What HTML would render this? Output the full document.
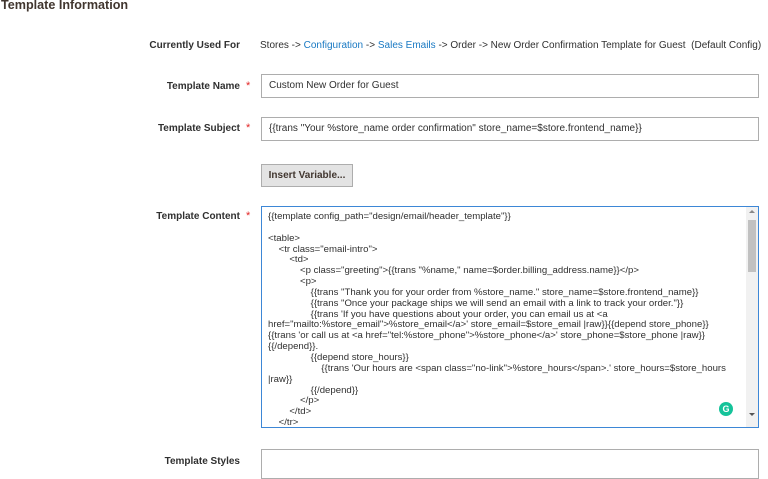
<!DOCTYPE html>
<html><head><meta charset="utf-8"><style>
*{margin:0;padding:0;box-sizing:border-box}
body{width:768px;height:471px;overflow:hidden;background:#fff;font-family:"Liberation Sans","DejaVu Sans",sans-serif;color:#303030;position:relative}
.a{position:absolute;white-space:nowrap}
h1{position:absolute;left:1px;top:-2px;font-size:12.6px;font-weight:bold;color:#41362f}
.lbl{font-size:10px;font-weight:bold;color:#303030;text-align:right;right:528px}
.star{color:#e22626;font-size:11px;left:246px}
.inp{position:absolute;left:261px;width:498px;border:1px solid #adadad;background:#fff;font-size:10px;padding:0 7px;line-height:22px;color:#303030}
.lk{color:#1979c3}
.btn{left:261px;top:164px;width:92px;height:23px;background:#e3e3e3;border:1px solid #adadad;font-size:10px;font-weight:bold;color:#41362f;text-align:center;line-height:21px}
.ta{position:absolute;left:261px;top:206px;width:498px;height:222px;border:1px solid #3d87d6;overflow:hidden;font-size:9.6px;line-height:10.85px;color:#303030;padding:5px 20px 0 6px}
.ta div{white-space:nowrap}
.sb{position:absolute;right:0;top:0;width:12px;height:100%;background:#f1f1f1}
.th{position:absolute;left:2px;top:13px;width:8px;height:52px;background:#c1c1c1}
</style></head><body>
<h1>Template Information</h1>
<div class="a lbl" style="top:40px">Currently Used For</div>
<div class="a" style="left:260px;top:40px;font-size:10px">Stores -&gt; <span class="lk">Configuration</span> -&gt; <span class="lk">Sales Emails</span> -&gt; Order -&gt; New Order Confirmation Template for Guest &nbsp;(Default Config)</div>
<div class="a lbl" style="top:81px">Template Name</div><div class="a star" style="top:80px">*</div>
<div class="inp" style="top:74px;height:24px">Custom New Order for Guest</div>
<div class="a lbl" style="top:123px">Template Subject</div><div class="a star" style="top:122px">*</div>
<div class="inp" style="top:117px;height:24px">{{trans "Your %store_name order confirmation" store_name=$store.frontend_name}}</div>
<div class="a btn">Insert Variable...</div>
<div class="a lbl" style="top:211px">Template Content</div><div class="a star" style="top:210px">*</div>
<div class="ta">
<div>{{template config_path="design/email/header_template"}}</div>
<div>&nbsp;</div>
<div>&lt;table&gt;</div>
<div>&nbsp;&nbsp;&nbsp;&nbsp;&lt;tr class="email-intro"&gt;</div>
<div>&nbsp;&nbsp;&nbsp;&nbsp;&nbsp;&nbsp;&nbsp;&nbsp;&lt;td&gt;</div>
<div>&nbsp;&nbsp;&nbsp;&nbsp;&nbsp;&nbsp;&nbsp;&nbsp;&nbsp;&nbsp;&nbsp;&nbsp;&lt;p class="greeting"&gt;{{trans "%name," name=$order.billing_address.name}}&lt;/p&gt;</div>
<div>&nbsp;&nbsp;&nbsp;&nbsp;&nbsp;&nbsp;&nbsp;&nbsp;&nbsp;&nbsp;&nbsp;&nbsp;&lt;p&gt;</div>
<div>&nbsp;&nbsp;&nbsp;&nbsp;&nbsp;&nbsp;&nbsp;&nbsp;&nbsp;&nbsp;&nbsp;&nbsp;&nbsp;&nbsp;&nbsp;&nbsp;{{trans "Thank you for your order from %store_name." store_name=$store.frontend_name}}</div>
<div>&nbsp;&nbsp;&nbsp;&nbsp;&nbsp;&nbsp;&nbsp;&nbsp;&nbsp;&nbsp;&nbsp;&nbsp;&nbsp;&nbsp;&nbsp;&nbsp;{{trans "Once your package ships we will send an email with a link to track your order."}}</div>
<div>&nbsp;&nbsp;&nbsp;&nbsp;&nbsp;&nbsp;&nbsp;&nbsp;&nbsp;&nbsp;&nbsp;&nbsp;&nbsp;&nbsp;&nbsp;&nbsp;{{trans 'If you have questions about your order, you can email us at &lt;a</div>
<div>href="mailto:%store_email"&gt;%store_email&lt;/a&gt;' store_email=$store_email |raw}}{{depend store_phone}}</div>
<div>{{trans 'or call us at &lt;a href="tel:%store_phone"&gt;%store_phone&lt;/a&gt;' store_phone=$store_phone |raw}}</div>
<div>{{/depend}}.</div>
<div>&nbsp;&nbsp;&nbsp;&nbsp;&nbsp;&nbsp;&nbsp;&nbsp;&nbsp;&nbsp;&nbsp;&nbsp;&nbsp;&nbsp;&nbsp;&nbsp;{{depend store_hours}}</div>
<div>&nbsp;&nbsp;&nbsp;&nbsp;&nbsp;&nbsp;&nbsp;&nbsp;&nbsp;&nbsp;&nbsp;&nbsp;&nbsp;&nbsp;&nbsp;&nbsp;&nbsp;&nbsp;&nbsp;&nbsp;{{trans 'Our hours are &lt;span class="no-link"&gt;%store_hours&lt;/span&gt;.' store_hours=$store_hours</div>
<div>|raw}}</div>
<div>&nbsp;&nbsp;&nbsp;&nbsp;&nbsp;&nbsp;&nbsp;&nbsp;&nbsp;&nbsp;&nbsp;&nbsp;&nbsp;&nbsp;&nbsp;&nbsp;{{/depend}}</div>
<div>&nbsp;&nbsp;&nbsp;&nbsp;&nbsp;&nbsp;&nbsp;&nbsp;&nbsp;&nbsp;&nbsp;&nbsp;&lt;/p&gt;</div>
<div>&nbsp;&nbsp;&nbsp;&nbsp;&nbsp;&nbsp;&nbsp;&nbsp;&lt;/td&gt;</div>
<div>&nbsp;&nbsp;&nbsp;&nbsp;&lt;/tr&gt;</div>
<div class="sb"><div class="th"></div>
<div style="position:absolute;left:3px;top:3px;border:3px solid transparent;border-bottom:3px solid #888;border-top:0"></div>
<div style="position:absolute;left:3px;top:206px;border:3px solid transparent;border-top:3px solid #555;border-bottom:0"></div>
</div>
<div style="position:absolute;left:457px;top:195px;width:14px;height:14px;border-radius:50%;background:#15c39a;color:#fff;font-size:9px;font-weight:bold;text-align:center;line-height:14px">G</div>
</div>
<div class="a lbl" style="top:456px">Template Styles</div>
<div class="inp" style="top:449px;height:30px"></div>
</body></html>
